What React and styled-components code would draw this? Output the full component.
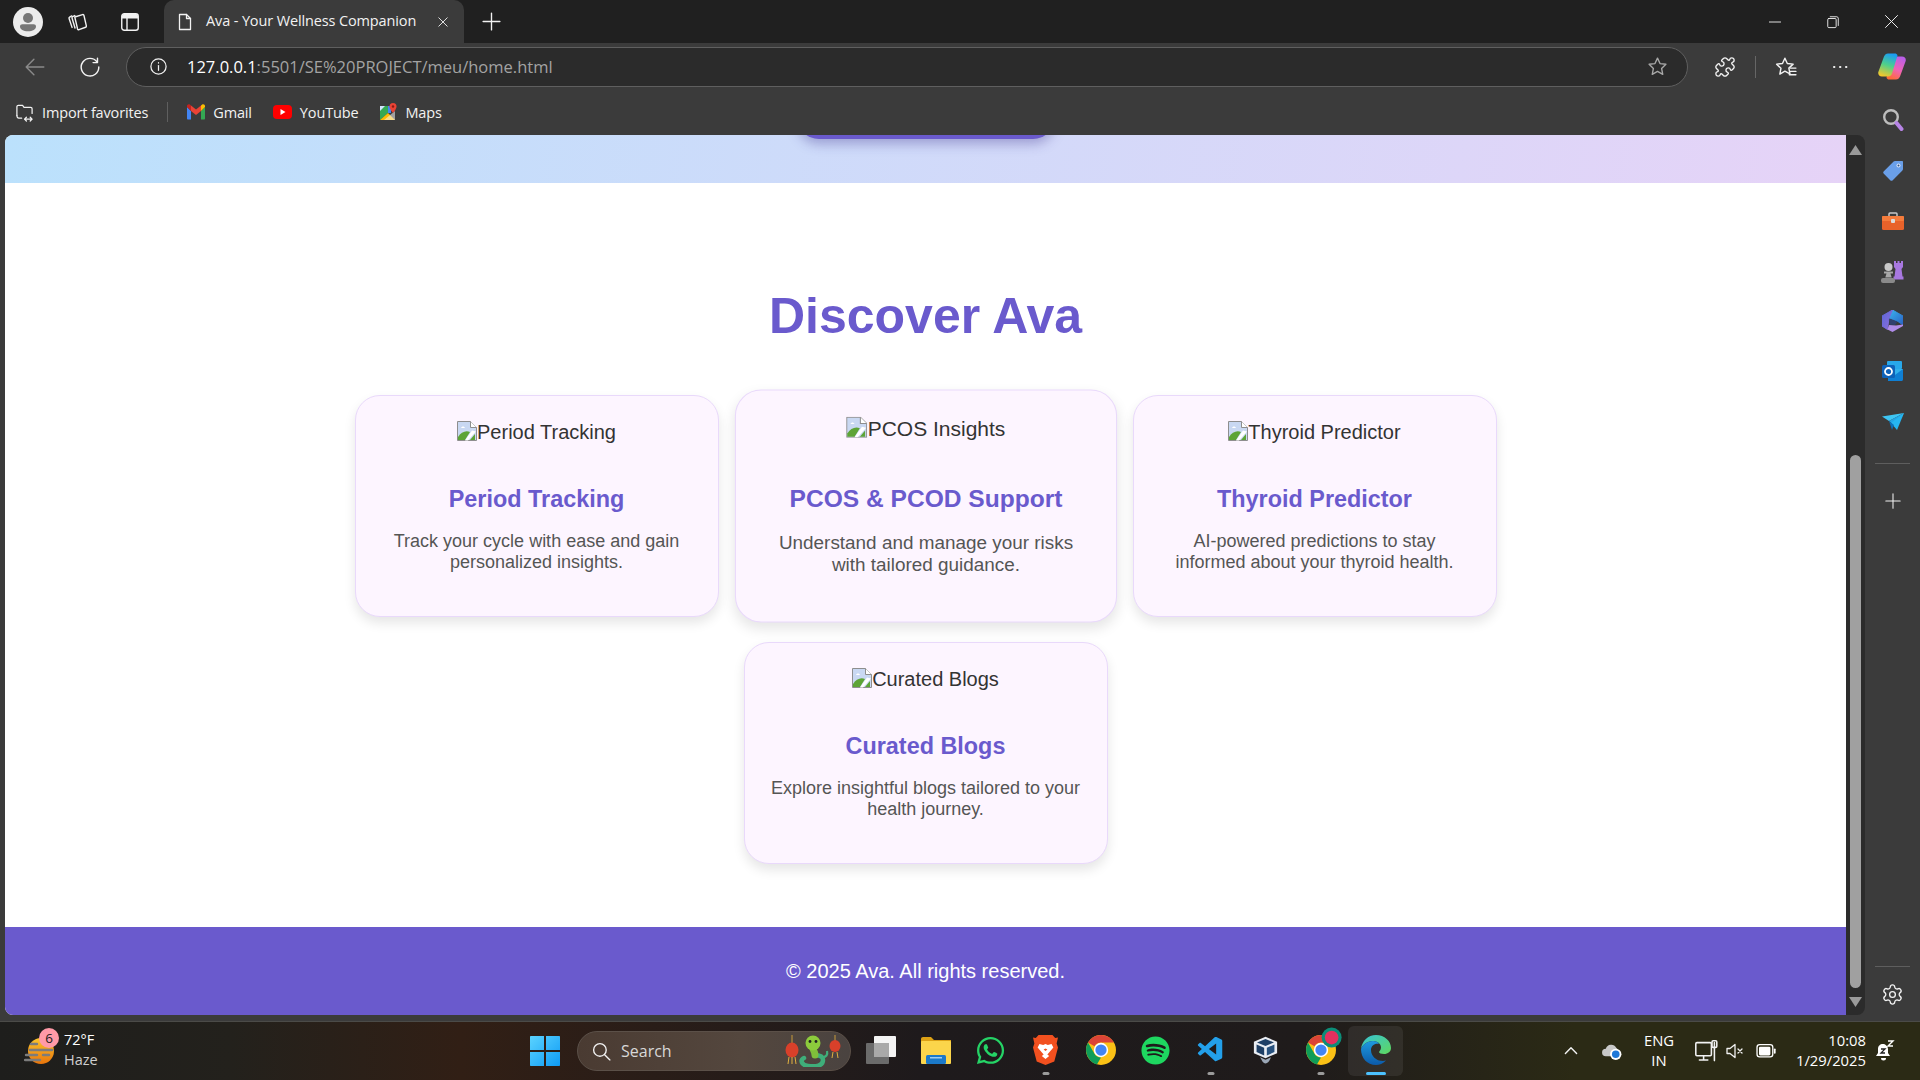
import React from 'react';
import styled, { createGlobalStyle } from 'styled-components';
import { FaWhatsapp, FaSpotify } from 'react-icons/fa';
import { VscVscode } from 'react-icons/vsc';
import { Puzzle, Settings } from 'lucide-react';

const PURPLE = '#6a5acd';
const UI_FONT = '"Open Sans", "Liberation Sans", sans-serif';

const GlobalStyle = createGlobalStyle`
  html, body { margin: 0; padding: 0; height: 100%; overflow: hidden; }
  body { font-family: "Liberation Sans", Arial, sans-serif; background: #3b3b3b; }
  * { box-sizing: border-box; }
  svg { display: block; flex-shrink: 0; }
`;

const Screen = styled.div`
  width: 1920px;
  height: 1080px;
  display: flex;
  flex-direction: column;
  overflow: hidden;
`;

/* ---------- tab strip ---------- */
const TabStrip = styled.div`
  height: 43px;
  background: #202020;
  display: flex;
  align-items: center;
  padding-left: 12px;
  flex-shrink: 0;
`;
const StripButton = styled.div`
  width: ${p => p.$w || 32}px;
  margin-right: ${p => p.$mr || 0}px;
  display: flex;
  justify-content: center;
  align-items: center;
  flex-shrink: 0;
`;
const Tab = styled.div`
  width: 300px;
  height: 43px;
  background: #3b3b3b;
  border-radius: 10px 10px 0 0;
  display: flex;
  align-items: center;
  flex-shrink: 0;
  padding: 0 14px 0 11px;
  color: #f2f2f2;
  font: 14.5px ${UI_FONT};
`;
const TabTitle = styled.span`
  flex: 1;
  margin-left: 11px;
  padding-bottom: 2px;
  white-space: nowrap;
  letter-spacing: -0.13px;
`;
const WindowButtons = styled.div`
  margin-left: auto;
  display: flex;
  align-items: center;
`;
const WindowButton = styled.div`
  width: 58px;
  display: flex;
  justify-content: center;
`;

/* ---------- address bar ---------- */
const Toolbar = styled.div`
  height: 46px;
  background: #3b3b3b;
  display: flex;
  align-items: center;
  flex-shrink: 0;
  padding: 1px 0 0 0;
`;
const NavButton = styled.div`
  width: ${p => p.$w}px;
  display: flex;
  justify-content: center;
  flex-shrink: 0;
`;
const UrlBar = styled.div`
  width: 1562px;
  height: 40px;
  border: 1.5px solid #5f5f5f;
  border-radius: 20px;
  background: #2b2b2b;
  display: flex;
  align-items: center;
  flex-shrink: 0;
  padding: 0 19px 0 22px;
  font: 16.5px ${UI_FONT};
`;
const UrlHost = styled.span`
  color: #fff;
  margin-left: 19px;
`;
const UrlPath = styled.span`
  color: #a3a3a3;
  flex: 1;
`;
const ToolDivider = styled.div`
  width: 1px;
  height: 22px;
  background: #666;
  flex-shrink: 0;
`;

/* ---------- body below address bar ---------- */
const Workspace = styled.div`
  flex: 1;
  display: flex;
  min-height: 0;
`;
const BrowserColumn = styled.div`
  flex: 1;
  display: flex;
  flex-direction: column;
  min-width: 0;
`;
const BookmarkBar = styled.div`
  height: 46px;
  display: flex;
  align-items: center;
  padding-left: 15px;
  color: #f2f2f2;
  font: 14.5px ${UI_FONT};
  letter-spacing: -0.15px;
  flex-shrink: 0;
`;
const Bookmark = styled.div`
  display: flex;
  align-items: center;
  gap: 8px;
  margin-right: ${p => p.$mr}px;
`;
const BookmarkDivider = styled.div`
  width: 1px;
  height: 20px;
  background: #5f5f5f;
  margin: 0 19px 0 19px;
`;
const PageRow = styled.div`
  flex: 1;
  display: flex;
  padding: 0 0 6px 5px;
  min-height: 0;
`;
const Page = styled.main`
  width: 1841px;
  background: #fff;
  border-radius: 8px 0 0 8px;
  overflow: hidden;
  display: flex;
  flex-direction: column;
`;
const Hero = styled.div`
  height: 48px;
  background: linear-gradient(100deg, #bbe1fc 0%, #e6d3f7 100%);
  overflow: hidden;
  flex-shrink: 0;
  display: flex;
  justify-content: center;
`;
const HeroButton = styled.div`
  width: 258px;
  height: 44px;
  margin-top: -40px;
  background: ${PURPLE};
  border-radius: 25px;
  box-shadow: 0 5px 12px rgba(60, 50, 140, 0.35);
`;
const Features = styled.section`
  flex: 1;
  padding-top: 104px;
  display: flex;
  flex-direction: column;
  align-items: center;
`;
const SectionTitle = styled.h2`
  margin: 0 0 50px;
  font-size: 50px;
  line-height: 58px;
  font-weight: 700;
  color: ${PURPLE};
`;
const CardGrid = styled.div`
  width: 1200px;
  display: flex;
  flex-wrap: wrap;
  justify-content: center;
  gap: 25px;
`;
const Card = styled.article`
  width: 364px;
  height: 222px;
  padding: 25px 25px 0;
  background: #fdf5ff;
  border: 1.5px solid #e9d9fb;
  border-radius: 25px;
  text-align: center;
  box-shadow: 0 6px 12px rgba(0, 0, 0, 0.1);
  transform: ${p => (p.$hovered ? 'scale(1.05)' : 'none')};
`;
const MissingImage = styled.div`
  height: 65px;
  display: flex;
  justify-content: center;
  align-items: flex-start;
  color: #333;
  font-size: 20px;
  line-height: 23px;
`;
const CardTitle = styled.h3`
  margin: 0 0 18px;
  font-size: 23.4px;
  line-height: 27px;
  font-weight: 700;
  color: ${PURPLE};
`;
const CardText = styled.p`
  margin: 0;
  font-size: 18px;
  line-height: 21px;
  color: #555;
`;
const Footer = styled.footer`
  height: 88px;
  background: ${PURPLE};
  color: #fff;
  font-size: 20px;
  display: flex;
  align-items: center;
  justify-content: center;
  flex-shrink: 0;
`;

/* ---------- scrollbar and edge sidebar ---------- */
const Scrollbar = styled.div`
  width: 19px;
  background: #2b2b2b;
  border-radius: 0 8px 8px 0;
  display: flex;
  flex-direction: column;
  align-items: center;
  padding: 10px 0 8px;
`;
const ScrollThumb = styled.div`
  width: 11px;
  height: 533px;
  margin-top: auto;
  margin-bottom: 9px;
  background: #a0a0a0;
  border-radius: 6px;
`;
const Sidebar = styled.aside`
  width: 55px;
  display: flex;
  flex-direction: column;
  align-items: center;
  padding: 19px 0 15px;
`;
const SideIcon = styled.div`
  height: ${p => p.$h || 50}px;
  display: flex;
  align-items: center;
  justify-content: center;
`;
const SideRule = styled.div`
  width: 35px;
  height: 1px;
  background: #5e5e5e;
  margin: ${p => p.$m};
`;

/* ---------- taskbar ---------- */
const Taskbar = styled.div`
  height: 59px;
  border-top: 1px solid #4b4b48;
  background: linear-gradient(90deg, #1e1e1c 0%, #23211c 12%, #311f15 24%, #1e1a1c 48%, #1f1b1b 68%, #2b2a15 82%, #2b2a15 100%);
  display: flex;
  align-items: center;
  position: relative;
  flex-shrink: 0;
`;
const Weather = styled.div`
  width: 530px;
  display: flex;
  align-items: center;
  padding-left: 24px;
  flex-shrink: 0;
`;
const WeatherBadge = styled.span`
  position: absolute;
  left: 39px;
  top: 6px;
  width: 20px;
  height: 20px;
  border-radius: 50%;
  background: #ff9aa8;
  color: #1a1a1a;
  font: 13.5px/20px ${UI_FONT};
  text-align: center;
`;
const WeatherText = styled.div`
  margin-left: 10px;
  padding-bottom: 2px;
  font: 14.5px/20px ${UI_FONT};
  color: #fff;
`;
const WeatherSub = styled.div`
  color: #cfcfcf;
`;
const SearchPill = styled.div`
  width: 274px;
  height: 40px;
  margin-left: 17px;
  border-radius: 20px;
  background: linear-gradient(90deg, #4a3b32, #54473e 60%, #4a4340);
  border: 1px solid #5b5048;
  display: flex;
  align-items: center;
  padding: 0 9px 0 13px;
  color: #d8d8d8;
  font: 16px ${UI_FONT};
  flex-shrink: 0;
`;
const SearchLabel = styled.span`
  margin-left: 9px;
  flex: 1;
`;
const AppRow = styled.div`
  display: flex;
  margin-left: 2px;
`;
const AppSlot = styled.div`
  position: relative;
  width: 55px;
  height: 50px;
  display: flex;
  align-items: center;
  justify-content: center;
  border-radius: 6px;
  padding-bottom: 2px;
  background: ${p => (p.$active ? 'rgba(255, 255, 255, 0.07)' : 'transparent')};
`;
const RunDot = styled.span`
  position: absolute;
  bottom: 1px;
  left: 50%;
  transform: translateX(-50%);
  width: ${p => (p.$active ? 20 : 7)}px;
  height: 3.5px;
  border-radius: 2px;
  background: ${p => (p.$active ? '#4cc2ff' : '#9b9b9b')};
`;
const Tray = styled.div`
  margin-left: auto;
  padding-right: 16px;
  display: flex;
  align-items: center;
  color: #fff;
  font: 14.8px/20px ${UI_FONT};
`;
const TrayItem = styled.div`
  width: ${p => p.$w}px;
  display: flex;
  justify-content: center;
  text-align: ${p => p.$align || 'center'};
  flex-shrink: 0;
`;
const ClockText = styled.div`
  width: 100%;
  padding-bottom: 3px;
`;

/* ---------- drawings ---------- */
const line = { fill: 'none', stroke: 'currentColor', strokeWidth: 1.3, strokeLinecap: 'round', strokeLinejoin: 'round' };

const Stroke = ({ size = 20, color = '#f2f2f2', children }) => (
  <svg width={size} height={size} viewBox="0 0 20 20" style={{ color }} {...line}>{children}</svg>
);

const Avatar = () => (
  <svg width="30" height="30" viewBox="0 0 30 30">
    <circle cx="15" cy="15" r="15" fill="#ececec" />
    <circle cx="15" cy="11" r="5" fill="#767676" />
    <path d="M7 19.500c0-1.400 1-2.300 2.400-2.300h11.200c1.400 0 2.400.9 2.400 2.300 0 3-3.400 4.800-8 4.800s-8-1.800-8-4.800z" fill="#767676" />
  </svg>
);
const PageGlyph = () => (
  <Stroke size={20}><path d="M4.500 2.500h7l4 4v11h-11z" /><path d="M11.500 2.500v4h4" /></Stroke>
);
const BrokenImage = () => (
  <svg width="20" height="20" viewBox="0 0 20 20">
    <path d="M.5.500h13l6 6v13H.5z" fill="#c9d8f2" stroke="#8e8e8e" />
    <path d="M13.500.500v6h6" fill="#fff" stroke="#8e8e8e" />
    <path d="M4 7c1-2 3-2 4 0z" fill="#fff" />
    <path d="M1 19v-3c3-5 8-7 12-5l-5 8z" fill="#5da436" />
    <path d="M15 9.500 8 19.500h3l8-9z" fill="#fff" />
    <path d="M13 19l5-6v6z" fill="#5da436" />
  </svg>
);
const GmailIcon = () => (
  <svg width="18" height="16" viewBox="0 0 18 16">
    <path d="M0 3v11.500c0 .6.500 1 1 1h3V7z" fill="#4285f4" />
    <path d="M14 7v8.500h3c.6 0 1-.4 1-1V3z" fill="#34a853" />
    <path d="M14 1.500V7l4-4V2c0-1.500-1.700-2.300-2.800-1.400z" fill="#fbbc04" />
    <path d="M4 7V1.500L9 5.500l5-4V7L9 11z" fill="#ea4335" />
    <path d="M0 2v1l4 4V1.500L2.800.6C1.700-.3 0 .5 0 2z" fill="#c5221f" />
  </svg>
);
const YoutubeIcon = () => (
  <svg width="19" height="14" viewBox="0 0 19 14">
    <rect width="19" height="14" rx="4" fill="#ff0000" />
    <path d="M7.500 4l5 3-5 3z" fill="#fff" />
  </svg>
);
const MapsIcon = () => (
  <svg width="18" height="18" viewBox="0 0 18 18">
    <path d="M1 3l8 0v7L1 17z" fill="#34a853" />
    <path d="M1 17l8-7 7 7z" fill="#fbbc04" />
    <path d="M9 3h3v7H9z" fill="#4285f4" />
    <path d="M1 3h5L1 8z" fill="#cfe3fb" />
    <path d="M5 17L16 8v9z" fill="#f4f4f4" opacity=".55" />
    <path d="M14 0a3.500 3.500 0 0 1 3.500 3.500C17.500 6 14 10 14 10s-3.500-4-3.500-6.500A3.500 3.500 0 0 1 14 0z" fill="#ea4335" />
    <circle cx="14" cy="3.500" r="1.200" fill="#8a1c14" />
  </svg>
);
const Copilot = () => (
  <svg width="28" height="27" viewBox="0 0 28 26">
    <defs>
      <linearGradient id="copA" x1="0.6" y1="0" x2="0.3" y2="1">
        <stop offset="0" stopColor="#1b9df2" /><stop offset=".5" stopColor="#4fd08a" /><stop offset="1" stopColor="#f5c72a" />
      </linearGradient>
      <linearGradient id="copB" x1="0.7" y1="0" x2="0.3" y2="1">
        <stop offset="0" stopColor="#b95ee8" /><stop offset=".55" stopColor="#f064b4" /><stop offset="1" stopColor="#ff6a35" />
      </linearGradient>
    </defs>
    <path d="M18 26h-7c-1 0-2-.5-2.500-2L14 6c.5-2 2-3 4-3h6c3 0 4.500 2.500 3.500 5L22 23c-1 2-2 3-4 3z" fill="url(#copB)" />
    <path d="M10 0h7c1 0 2 .5 2.500 2L14 20c-.5 2-2 3-4 3H4c-3 0-4.500-2.500-3.500-5L6 3c1-2 2-3 4-3z" fill="url(#copA)" />
  </svg>
);
const SearchGlass = () => (
  <svg width="22" height="24" viewBox="0 0 22 24">
    <circle cx="9" cy="9" r="6.800" fill="none" stroke="#bdbdbd" strokeWidth="2.400" />
    <path d="M14.500 15l5 6" stroke="#b784e6" strokeWidth="4" strokeLinecap="round" />
  </svg>
);
const TagIcon = () => (
  <svg width="22" height="22" viewBox="0 0 22 22">
    <path d="M13 1h7c.6 0 1 .4 1 1v7c0 .6-.2 1-.6 1.400L10.500 20.400a1.500 1.500 0 0 1-2 0L1.600 13.500a1.500 1.500 0 0 1 0-2L11.600 1.600C12 1.200 12.400 1 13 1z" fill="#6a9fe8" />
    <circle cx="16.500" cy="5.500" r="2" fill="#d9e6fa" /><circle cx="16.500" cy="5.500" r="1" fill="#31527f" />
  </svg>
);
const ToolboxIcon = () => (
  <svg width="22" height="18" viewBox="0 0 22 18">
    <path d="M7 4V2c0-.6.400-1 1-1h6c.6 0 1 .4 1 1v2" fill="none" stroke="#c8c8c8" strokeWidth="1.500" />
    <rect y="4" width="22" height="14" rx="1.500" fill="#e8622a" />
    <rect y="4" width="22" height="5" rx="1" fill="#f57c3c" />
    <rect x="9" y="7" width="4" height="4" rx="1" fill="#dcdcdc" />
  </svg>
);
const ChessIcon = () => (
  <svg width="23" height="24" viewBox="0 0 23 24">
    <path d="M13 2h2v2h1.500V2h2v2h1.500V2h2v6l-1.500 2 1 7.500h1v3h-10v-3h1l1-7.500L13 8z" fill="#a878e0" />
    <circle cx="7.500" cy="8" r="4" fill="#c8c8c8" />
    <path d="M3 12.500h9v2H9.500l1.200 4H4.300l1.200-4H3z" fill="#a8a8a8" />
    <rect y="19" width="14" height="5" rx="2" fill="#8a8a8a" />
  </svg>
);
const OfficeIcon = () => (
  <svg width="21" height="22" viewBox="0 0 21 22">
    <defs>
      <linearGradient id="offA" x1="0" y1="0" x2="1" y2="1"><stop offset="0" stopColor="#3ab4ee" /><stop offset="1" stopColor="#2a62c4" /></linearGradient>
      <linearGradient id="offB" x1="0" y1="0" x2="1" y2="1"><stop offset="0" stopColor="#5b68d8" /><stop offset="1" stopColor="#8f6cdc" /></linearGradient>
    </defs>
    <path d="M10.500 0L21 6v9l-5-3.500L7 8z" fill="url(#offA)" stroke="url(#offA)" strokeLinejoin="round" />
    <path d="M10.500 0L0 6v10l5.500 3.500L7 8z" fill="url(#offB)" stroke="url(#offB)" strokeLinejoin="round" />
    <path d="M5.500 19.500l5 2.500L21 16v-1.500l-7 1-7-.5z" fill="#b08ce8" />
    <path d="M7.500 8.500l8 3-2.500 3.500-5.500-.2z" fill="#31406e" />
  </svg>
);
const OutlookIcon = () => (
  <svg width="21" height="20" viewBox="0 0 21 20">
    <rect x="5" y="0" width="15" height="8" rx="1" fill="#28a8ea" />
    <path d="M6 8h15v10.500c0 .8-.7 1.500-1.500 1.500H6z" fill="#0f7fd4" />
    <path d="M21 8l-8 6-7-4v-2z" fill="#50d9ff" opacity=".55" />
    <rect y="4" width="13" height="13" rx="1.500" fill="#0f62b8" />
    <circle cx="6.500" cy="10.500" r="3.500" fill="none" stroke="#fff" strokeWidth="1.800" />
  </svg>
);
const PlaneIcon = () => (
  <svg width="22" height="17" viewBox="0 0 22 17">
    <path d="M0 3.500L22 0 7 8z" fill="#3ec6f4" />
    <path d="M22 0L7 8l3 2.500L15 13z" fill="#23a6e6" />
    <path d="M22 0L15 17 9 10z" fill="#26b6f1" />
    <path d="M7 8l3 9 2-5z" fill="#0e6fb8" />
  </svg>
);
const WeatherIcon = () => (
  <svg width="30" height="26" viewBox="0 0 30 26">
    <defs><linearGradient id="sun" x1="0" y1="0" x2="0" y2="1"><stop offset="0" stopColor="#fbc52b" /><stop offset="1" stopColor="#e8750c" /></linearGradient></defs>
    <ellipse cx="17" cy="13" rx="13" ry="13" fill="url(#sun)" />
    <g stroke="#7c7c7c" strokeWidth="2.400" strokeLinecap="round">
      <path d="M7 6h6M6 12h22M2 17h11M19 17h6M1 22h15" />
    </g>
  </svg>
);
const WindowsLogo = () => (
  <svg width="30" height="30" viewBox="0 0 30 30">
    <defs><linearGradient id="win" x1="0" y1="0" x2="1" y2="1"><stop offset="0" stopColor="#5bd3ff" /><stop offset="1" stopColor="#0e9bf5" /></linearGradient></defs>
    <path d="M0 1c0-.6.400-1 1-1h13v14H0zM16 0h13c.6 0 1 .4 1 1v13H16zM0 16h14v14H1c-.6 0-1-.4-1-1zM16 16h14v13c0 .6-.4 1-1 1H16z" fill="url(#win)" />
  </svg>
);
const SnakeMascot = () => (
  <svg width="56" height="32" viewBox="0 0 56 32">
    <path d="M7 0v8M50 0v6" stroke="#c79a3a" strokeWidth="1" />
    <ellipse cx="7" cy="15" rx="6.500" ry="7.500" fill="#d8402a" /><path d="M4 22l-1 7M7 22v7M10 22l1 7" stroke="#e0b040" />
    <ellipse cx="50" cy="11" rx="5.500" ry="6" fill="#d8402a" /><path d="M48 17l-1 6M52 17l1 6" stroke="#e0b040" />
    <path d="M19 23c-4 2-3 7 4 8 8 1 15 0 15-6 0-4-5-5-9-5" fill="none" stroke="#3fae7a" strokeWidth="4.500" strokeLinecap="round" />
    <path d="M27 10c0 4 3 6 3 10" fill="none" stroke="#7fbe3a" strokeWidth="7" strokeLinecap="round" />
    <ellipse cx="28" cy="8" rx="7.500" ry="7.500" fill="#8ccb3c" />
    <circle cx="25" cy="6.500" r="1.400" fill="#222" /><circle cx="31" cy="6.500" r="1.400" fill="#222" />
    <path d="M38 22c3 0 5-2 4-6" fill="none" stroke="#3fae7a" strokeWidth="2.200" />
  </svg>
);
const TaskViewIcon = () => (
  <svg width="30" height="28" viewBox="0 0 30 28">
    <rect x="0" y="7" width="23" height="21" fill="#6b6b6b" rx="1" />
    <rect x="8" y="0" width="22" height="21" rx="1" fill="#f4f4f4" />
    <rect x="8" y="7" width="15" height="14" fill="#a9a9a9" />
  </svg>
);
const FolderIcon = () => (
  <svg width="30" height="27" viewBox="0 0 30 27">
    <path d="M0 2c0-1.100.900-2 2-2h8l3 3h17v8H0z" fill="#dca115" />
    <rect y="4" width="30" height="23" rx="1" fill="#fbd54b" />
    <rect x="5" y="18" width="20" height="9" rx="1.500" fill="#1b79c9" />
    <rect x="9" y="20" width="12" height="1.500" fill="#9ccdf2" />
  </svg>
);
const BraveIcon = () => (
  <svg width="25" height="30" viewBox="0 0 27 30" preserveAspectRatio="none">
    <path d="M6 0h15l3 3 3-.5-1.500 6 1.500 4-4 14L13.500 30 4 26.500 0 12.500l1.500-4L0 2.500 3 3z" fill="#f2501f" />
    <path d="M13.500 24l-4-3 2-1.500-6.500-7 2-3.500 4 1 2.500-1 2.500 1 4-1 2 3.500-6.500 7 2 1.500z" fill="#fff" />
    <path d="M13.500 16l-2-1.500 2-1 2 1z" fill="#f2501f" />
  </svg>
);
const ChromeIcon = ({ badge }) => (
  <svg width="30" height="30" viewBox="0 0 48 48" style={{ overflow: 'visible' }}>
    <circle cx="24" cy="24" r="24" fill="#fbc116" />
    <path d="M24 0a24 24 0 0 1 20.800 12H24a12 12 0 0 0-10.400 6L3.200 12A24 24 0 0 1 24 0z" fill="#db4437" />
    <path d="M3.200 12l10.400 18A12 12 0 0 0 24 36l-6.500 11A24 24 0 0 1 3.200 12z" fill="#0f9d58" />
    <circle cx="24" cy="24" r="11.500" fill="#fff" />
    <circle cx="24" cy="24" r="9" fill="#4285f4" />
    {badge && <circle cx="41" cy="4" r="16" fill="#0c8d78" />}
    {badge && <circle cx="41" cy="4" r="11" fill="#e4305e" />}
  </svg>
);
const VirtualBoxIcon = () => (
  <svg width="25" height="29" viewBox="0 0 28 38" preserveAspectRatio="none">
    <path d="M14 1l13 6.500v15L14 29 1 22.500v-15z" fill="#e9edf3" />
    <path d="M14 4l9.500 4.500L14 13 4.500 8.500z" fill="#1e3f66" />
    <path d="M4 11l8.500 4.500v10L4 21z" fill="#1e3f66" />
    <path d="M24 11l-8.500 4.500v10L24 21z" fill="#28527f" />
    <path d="M8 28c2 4 3 8 6 8 3 0 5-4 6-8l-6 3z" fill="#9aa6b6" />
  </svg>
);
const EdgeIcon = () => (
  <svg width="30" height="30" viewBox="0 0 30 30">
    <defs>
      <linearGradient id="edgeA" x1="0" y1="0" x2="1" y2="1"><stop offset="0" stopColor="#36c4d8" /><stop offset="1" stopColor="#5fd85c" /></linearGradient>
      <linearGradient id="edgeB" x1="0" y1="0" x2="0" y2="1"><stop offset="0" stopColor="#1e9ae0" /><stop offset="1" stopColor="#0c5aa8" /></linearGradient>
    </defs>
    <path d="M15 0c8.500 0 15 6 15 13 0 3.500-3 6-7 6-3 0-5-1-5-2 0-.7 2-1.500 2-4.500C20 8.500 16 6 12 6 6 6 1.500 10 0 14 1 6 7 0 15 0z" fill="url(#edgeA)" />
    <path d="M0 14c1.500-4 6-8 12-8 3 0 5 1 6 3-4-1-8 1.500-8 6 0 6 5 11 12 11 1 0 2-.2 3-.5C22 28.500 18.500 30 15 30 6 30 0 23 0 14z" fill="url(#edgeB)" />
  </svg>
);

const features = [
  { alt: 'Period Tracking', title: 'Period Tracking', text: 'Track your cycle with ease and gain personalized insights.' },
  { alt: 'PCOS Insights', title: 'PCOS & PCOD Support', text: 'Understand and manage your risks with tailored guidance.', hovered: true },
  { alt: 'Thyroid Predictor', title: 'Thyroid Predictor', text: 'AI-powered predictions to stay informed about your thyroid health.' },
  { alt: 'Curated Blogs', title: 'Curated Blogs', text: 'Explore insightful blogs tailored to your health journey.' },
];

const apps = [
  { key: 'view', icon: <TaskViewIcon /> },
  { key: 'files', icon: <FolderIcon /> },
  { key: 'whatsapp', icon: <FaWhatsapp size={31} color="#25d366" /> },
  { key: 'brave', icon: <BraveIcon />, running: true },
  { key: 'chrome', icon: <ChromeIcon /> },
  { key: 'spotify', icon: <FaSpotify size={29} color="#1ed760" /> },
  { key: 'code', icon: <VscVscode size={30} color="#23a0ea" />, running: true },
  { key: 'vbox', icon: <VirtualBoxIcon /> },
  { key: 'chrome2', icon: <ChromeIcon badge />, running: true },
  { key: 'edge', icon: <EdgeIcon />, active: true },
];

const App = () => (
  <Screen>
    <GlobalStyle />
    <TabStrip>
      <StripButton $w={32} $mr={17}><Avatar /></StripButton>
      <StripButton $w={32} $mr={27}>
        <Stroke size={22}>
          <path d="M8 5.500l7-2.200c.6-.2 1.100.1 1.300.7l2.200 9.500c.1.600-.1 1.100-.7 1.300l-6 2.200c-.6.200-1.100-.1-1.300-.7L8 5.500z" />
          <path d="M8 4.200L6 5.200c-.5.300-.7.800-.5 1.300l2.700 9" />
          <path d="M5.200 4.500L3.300 5.600c-.5.300-.7.800-.5 1.300l2.700 8" />
        </Stroke>
      </StripButton>
      <StripButton $w={20} $mr={24}>
        <svg width="18" height="18" viewBox="0 0 18 18">
          <rect x=".75" y=".75" width="16.500" height="16.500" rx="2.500" fill="none" stroke="#f2f2f2" strokeWidth="1.400" />
          <path d="M1 3c0-1 1-2 2-2h12c1 0 2 1 2 2v2.500H1z" fill="#f2f2f2" />
          <path d="M6 5v12" stroke="#f2f2f2" strokeWidth="1.400" />
        </svg>
      </StripButton>
      <Tab>
        <PageGlyph />
        <TabTitle>Ava - Your Wellness Companion</TabTitle>
        <Stroke size={14}><path d="M4 4l12 12M16 4L4 16" /></Stroke>
      </Tab>
      <StripButton $w={54}>
        <Stroke size={21}><path d="M10 2v16M2 10h16" /></Stroke>
      </StripButton>
      <WindowButtons>
        <WindowButton><Stroke size={14}><path d="M2 10h16" /></Stroke></WindowButton>
        <WindowButton><Stroke size={14}><rect x="2.500" y="5" width="12" height="13" rx="1.500" /><path d="M6 2.500h9.500c1 0 2 1 2 2V15" /></Stroke></WindowButton>
        <WindowButton><Stroke size={15}><path d="M2 2l16 16M18 2L2 18" /></Stroke></WindowButton>
      </WindowButtons>
    </TabStrip>

    <Toolbar>
      <NavButton $w={70}><Stroke size={22} color="#8a8a8a"><path d="M18 10H2M9 3l-7 7 7 7" /></Stroke></NavButton>
      <NavButton $w={40}><Stroke size={22}><path d="M16.500 5.500A8 8 0 1 0 18 10" /><path d="M16.800 2v4h-4" /></Stroke></NavButton>
      <NavButton $w={16} />
      <UrlBar>
        <Stroke size={19}><circle cx="10" cy="10" r="8" /><path d="M10 9v5" /><path d="M10 6v.4" /></Stroke>
        <UrlHost>127.0.0.1</UrlHost>
        <UrlPath>:5501/SE%20PROJECT/meu/home.html</UrlPath>
        <Stroke size={21} color="#a8a8a8"><path d="M10 2l2.400 5.200 5.600.7-4.100 3.900 1.100 5.700-5-2.800-5 2.800 1.100-5.700L2 7.900l5.600-.7z" /></Stroke>
      </UrlBar>
      <NavButton $w={7} />
      <NavButton $w={60}><Puzzle size={22} color="#f2f2f2" strokeWidth={1.5} /></NavButton>
      <ToolDivider />
      <NavButton $w={60}><Stroke size={22}><path d="M9 2l2.200 4.800 5.300.6-3.900 3.600 1 5.200L9 13.800l-4.600 2.600 1-5.200L1.500 7.400l5.300-.6z" /><path d="M14 11h5M14 14h5M13 17h6" /></Stroke></NavButton>
      <NavButton $w={48}><Stroke size={20}><path d="M4 10h.4M10 10h.4M16 10h.4" strokeWidth="2" /></Stroke></NavButton>
      <NavButton $w={56}><Copilot /></NavButton>
    </Toolbar>

    <Workspace>
      <BrowserColumn>
        <BookmarkBar>
          <Bookmark $mr={0}>
            <Stroke size={19}><path d="M2 13V4c0-1 .7-1.500 1.500-1.500H8l1.500 2h7c.8 0 1.500.7 1.500 1.500v5" /><path d="M2 13c0 1.500.7 3 2 3h3" /><path d="M10 17h8M10 17l2-2M10 17l2 2M18 17l-2-2M18 17l-2 2" /></Stroke>
            Import favorites
          </Bookmark>
          <BookmarkDivider />
          <Bookmark $mr={21}><GmailIcon />Gmail</Bookmark>
          <Bookmark $mr={21}><YoutubeIcon />YouTube</Bookmark>
          <Bookmark $mr={0}><MapsIcon />Maps</Bookmark>
        </BookmarkBar>
        <PageRow>
          <Page>
            <Hero><HeroButton /></Hero>
            <Features>
              <SectionTitle>Discover Ava</SectionTitle>
              <CardGrid>
                {features.map(f => (
                  <Card key={f.title} $hovered={f.hovered}>
                    <MissingImage><BrokenImage />{f.alt}</MissingImage>
                    <CardTitle>{f.title}</CardTitle>
                    <CardText>{f.text}</CardText>
                  </Card>
                ))}
              </CardGrid>
            </Features>
            <Footer>© 2025 Ava. All rights reserved.</Footer>
          </Page>
          <Scrollbar>
            <svg width="13" height="10" viewBox="0 0 13 10"><path d="M6.500 0L13 10H0z" fill="#9a9a9a" /></svg>
            <ScrollThumb />
            <svg width="13" height="10" viewBox="0 0 13 10"><path d="M6.500 10L13 0H0z" fill="#9a9a9a" /></svg>
          </Scrollbar>
        </PageRow>
      </BrowserColumn>
      <Sidebar>
        <SideIcon $h={24}><SearchGlass /></SideIcon>
        <SideIcon $h={14} />
        <SideIcon $h={50}><TagIcon /></SideIcon>
        <SideIcon $h={50}><ToolboxIcon /></SideIcon>
        <SideIcon $h={50}><ChessIcon /></SideIcon>
        <SideIcon $h={50}><OfficeIcon /></SideIcon>
        <SideIcon $h={50}><OutlookIcon /></SideIcon>
        <SideIcon $h={50}><PlaneIcon /></SideIcon>
        <SideRule $m="17px 0 29px" />
        <Stroke size={16}><path d="M10 1v18M1 10h18" /></Stroke>
        <SideRule $m="auto 0 16px" />
        <Settings size={23} color="#f2f2f2" strokeWidth={1.4} />
      </Sidebar>
    </Workspace>

    <Taskbar>
      <Weather>
        <WeatherIcon />
        <WeatherBadge>6</WeatherBadge>
        <WeatherText>72°F<WeatherSub>Haze</WeatherSub></WeatherText>
      </Weather>
      <WindowsLogo />
      <SearchPill>
        <Stroke size={21}><circle cx="8.500" cy="8.500" r="6" /><path d="M13 13l5 5" /></Stroke>
        <SearchLabel>Search</SearchLabel>
        <SnakeMascot />
      </SearchPill>
      <AppRow>
        {apps.map(a => (
          <AppSlot key={a.key} $active={a.active}>
            {a.icon}
            {(a.running || a.active) && <RunDot $active={a.active} />}
          </AppSlot>
        ))}
      </AppRow>
      <Tray>
        <TrayItem $w={48}><Stroke size={16}><path d="M3 13l7-7 7 7" strokeWidth="1.800" /></Stroke></TrayItem>
        <TrayItem $w={32}>
          <svg width="21" height="17" viewBox="0 0 22 18">
            <path d="M5 14a4 4 0 0 1 0-8 6 6 0 0 1 11-1 4 4 0 0 1 2 3v6z" fill="#c8c8c8" />
            <circle cx="15.500" cy="12" r="6" fill="#fff" /><circle cx="15.500" cy="12" r="4" fill="#1f78d8" />
          </svg>
        </TrayItem>
        <TrayItem $w={64}><ClockText>ENG<br />IN</ClockText></TrayItem>
        <TrayItem $w={30}>
          <Stroke size={24}><rect x="1.500" y="3" width="13" height="11" rx="1" /><path d="M8 14v3M4.500 17.500h7M17 3v15" /><rect x="15" y="1.500" width="4" height="5.500" rx="1" /></Stroke>
        </TrayItem>
        <TrayItem $w={28}>
          <Stroke size={20}><path d="M2 7.500v5h3l5 4v-13l-5 4z" /><path d="M13 8l4 4M17 8l-4 4" /></Stroke>
        </TrayItem>
        <TrayItem $w={34}>
          <svg width="20" height="14" viewBox="0 0 22 16">
            <rect x=".75" y=".75" width="18" height="14" rx="3" fill="none" stroke="#fff" strokeWidth="1.500" />
            <rect x="3" y="3" width="13" height="10" rx="1.500" fill="#fff" />
            <rect x="20" y="5" width="2" height="6" rx="1" fill="#fff" />
          </svg>
        </TrayItem>
        <TrayItem $w={83} $align="right"><ClockText>10:08<br />1/29/2025</ClockText></TrayItem>
        <TrayItem $w={38}>
          <svg width="20" height="22" viewBox="0 0 20 22">
            <path d="M8 4c-3 0-5 2-5 5v4l-2 3h14l-2-3V9c0-3-3-5-5-5z" fill="#fff" />
            <path d="M6 18a2.500 2.500 0 0 0 5 0z" fill="#fff" />
            <path d="M13 1h5l-5 5h5" fill="none" stroke="#fff" strokeWidth="1.400" />
            <path d="M6 9h4l-4 4h4" fill="none" stroke="#222" strokeWidth="1.300" />
          </svg>
        </TrayItem>
      </Tray>
    </Taskbar>
  </Screen>
);

export default App;
